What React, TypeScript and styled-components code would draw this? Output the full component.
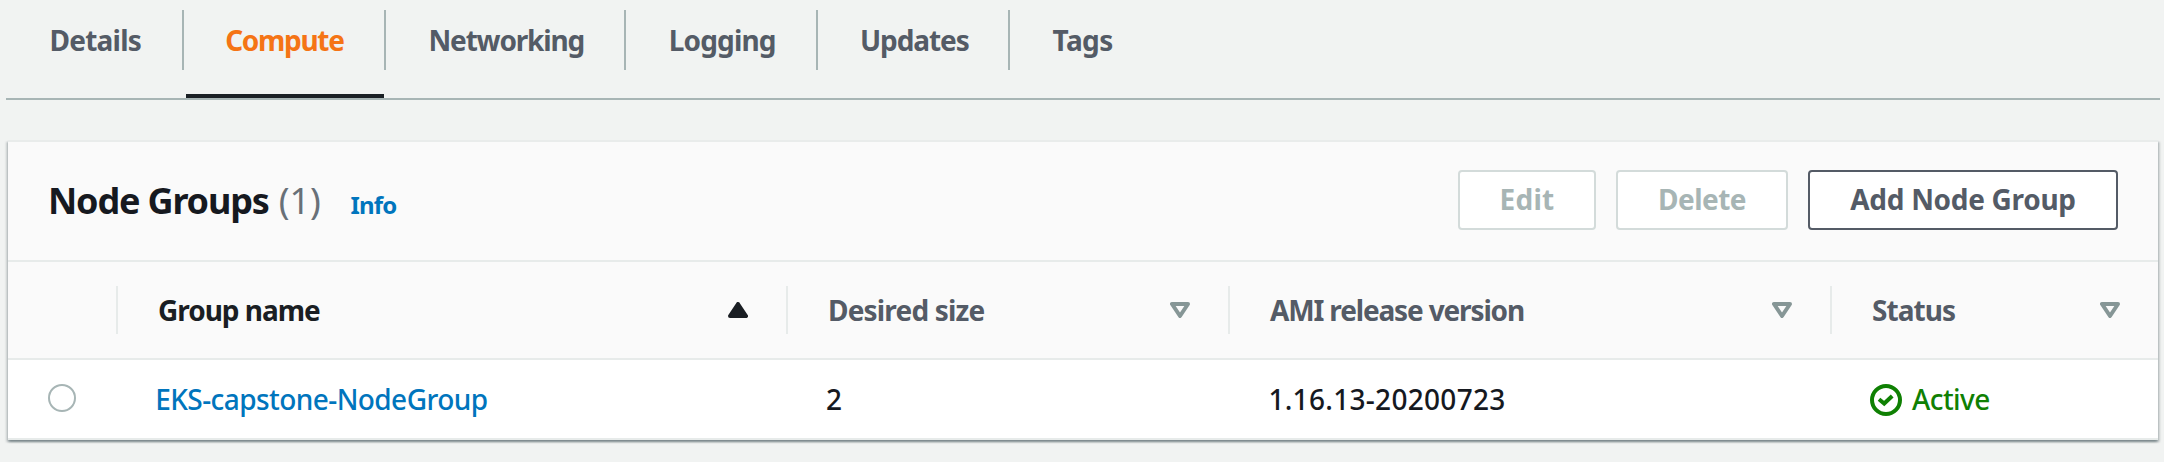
import React from 'react';
import styled, { createGlobalStyle } from 'styled-components';

const GlobalStyle = createGlobalStyle`
  *, *::before, *::after { box-sizing: border-box; }
  body {
    margin: 0;
    background: #f1f3f2;
    color: #16191f;
    font-family: "Noto Sans", "Open Sans", sans-serif;
    font-size: 28px;
    white-space: nowrap;
  }
`;

const Page = styled.main`
  padding: 0 4px 0 6px;
  height: 462px;
  overflow: hidden;
`;

const TabBar = styled.nav`
  display: flex;
  height: 100px;
  border-bottom: 2px solid #a7b5b5;
`;

const Tab = styled.a<{ $active?: boolean; $width: number }>`
  display: flex;
  flex-direction: column;
  justify-content: space-between;
  width: ${p => p.$width}px;
  padding-top: 10px;
  color: ${p => (p.$active ? '#f57415' : '#545b66')};

  &::after {
    content: '';
    height: 4px;
    margin: 0 2px;
    background: ${p => (p.$active ? '#1a2025' : 'transparent')};
  }
`;

const TabLabel = styled.span<{ $inset: number; $spacing: number; $last?: boolean }>`
  height: 60px;
  line-height: 60px;
  padding-left: ${p => p.$inset}px;
  border-right: ${p => (p.$last ? 'none' : '2px solid #a7b5b5')};
  font-weight: 700;
  letter-spacing: ${p => p.$spacing}px;
`;

const Panel = styled.section`
  margin: 40px 2px 0;
  border-top: 2px solid #e9eceb;
  background: #ffffff;
  box-shadow:
    0 2px 2px 0 rgba(0, 28, 36, 0.3),
    2px 2px 2px 0 rgba(0, 28, 36, 0.15),
    -2px 2px 2px 0 rgba(0, 28, 36, 0.15);
`;

const PanelHeader = styled.header`
  display: flex;
  justify-content: space-between;
  align-items: center;
  height: 120px;
  padding: 0 40px 2px;
  background: #fafafa;
  border-bottom: 2px solid #e7ebea;
`;

const Heading = styled.div`
  display: flex;
  align-items: baseline;
  padding-top: 2px;
`;

const Title = styled.h2`
  margin: 0;
  font-size: 36px;
  line-height: 44px;
  font-weight: 700;
  letter-spacing: -1.17px;
`;

const Counter = styled.span`
  margin-left: 10px;
  font-size: 36px;
  line-height: 44px;
  color: #687078;
`;

const InfoLink = styled.a`
  margin-left: 29.5px;
  font-size: 24px;
  font-weight: 700;
  letter-spacing: -0.8px;
  color: #0075bd;
`;

const Actions = styled.div`
  display: flex;
  gap: 20px;
`;

const Button = styled.button<{ $width: number; $spacing: number }>`
  width: ${p => p.$width}px;
  height: 60px;
  padding: 0 0 2px;
  border: 2px solid #545b66;
  border-radius: 4px;
  background: #ffffff;
  color: #545b66;
  font: inherit;
  font-weight: 700;
  line-height: 54px;
  letter-spacing: ${p => p.$spacing}px;

  &:disabled {
    border-color: #d3dbda;
    color: #a7b5b5;
  }
`;

const Columns = styled.div`
  display: grid;
  grid-template-columns: 110px 670px 442px 602px 326px;
`;

const HeadRow = styled(Columns)`
  height: 98px;
  padding: 24px 0;
  background: #fafafa;
  border-bottom: 2px solid #e7ebea;
`;

const HeadCell = styled.div<{ $sorted?: boolean; $spacing?: number }>`
  display: flex;
  align-items: center;
  justify-content: space-between;
  height: 48px;
  padding: 0 38px 0 40px;
  border-right: 2px solid #e7ebea;
  color: ${p => (p.$sorted ? '#1a1e23' : '#545b66')};
  font-weight: 700;
  line-height: 46px;
  letter-spacing: ${p => p.$spacing ?? 0}px;

  &:last-child {
    border-right: none;
  }
`;

const BodyRow = styled(Columns)`
  height: 80px;
  border-bottom: 2px solid #e7ebea;
`;

const Cell = styled.div<{ $inset?: number; $spacing?: number }>`
  display: flex;
  align-items: center;
  padding-left: ${p => p.$inset ?? 38}px;
  font-weight: 500;
  line-height: 78px;
  letter-spacing: ${p => p.$spacing ?? 0}px;
`;

const Radio = styled.span`
  width: 28px;
  height: 28px;
  margin-bottom: 2px;
  border: 2px solid #a7b5b5;
  border-radius: 50%;
`;

const GroupLink = styled.a`
  color: #0075bd;
`;

const Status = styled.span`
  display: flex;
  align-items: center;
  gap: 10px;
  color: #0f8003;
`;

const SortIcon = styled.svg`
  display: block;
  width: 20px;
  height: 16px;
`;

const StatusIcon = styled.svg`
  display: block;
  width: 32px;
  height: 32px;
  margin-top: 2px;
`;

const Ascending = () => (
  <SortIcon viewBox="0 0 20 16">
    <path d="M2 14L10 2l8 12z" fill="#1a1e23" stroke="#1a1e23" strokeWidth="4" strokeLinejoin="round" />
  </SortIcon>
);

const Sortable = () => (
  <SortIcon viewBox="0 0 20 16">
    <path d="M2 2h16l-8 12z" fill="none" stroke="#869696" strokeWidth="4" strokeLinejoin="round" />
  </SortIcon>
);

const tabs = [
  { label: 'Details', width: 178, inset: 43.4, spacing: -0.73 },
  { label: 'Compute', width: 202, inset: 41.2, spacing: -1.3, active: true },
  { label: 'Networking', width: 240, inset: 42.5, spacing: -1.17 },
  { label: 'Logging', width: 192, inset: 42.8, spacing: -0.85 },
  { label: 'Updates', width: 192, inset: 42, spacing: -1.08 },
  { label: 'Tags', width: 160, inset: 42.6, spacing: -0.6 },
];

const columns = [
  { label: 'Group name', spacing: -1.02, sorted: true },
  { label: 'Desired size', spacing: -0.82 },
  { label: 'AMI release version', spacing: -1.15 },
  { label: 'Status', spacing: -0.95 },
];

export default function App() {
  return (
    <>
      <GlobalStyle />
      <Page>
        <TabBar>
          {tabs.map((tab, i) => (
            <Tab key={tab.label} $active={tab.active} $width={tab.width}>
              <TabLabel $inset={tab.inset} $spacing={tab.spacing} $last={i === tabs.length - 1}>
                {tab.label}
              </TabLabel>
            </Tab>
          ))}
        </TabBar>

        <Panel>
          <PanelHeader>
            <Heading>
              <Title>Node Groups</Title>
              <Counter>(1)</Counter>
              <InfoLink>Info</InfoLink>
            </Heading>
            <Actions>
              <Button disabled $width={138} $spacing={0.27}>Edit</Button>
              <Button disabled $width={172} $spacing={-0.55}>Delete</Button>
              <Button $width={310} $spacing={-0.3}>Add Node Group</Button>
            </Actions>
          </PanelHeader>

          <HeadRow>
            <HeadCell />
            {columns.map(column => (
              <HeadCell key={column.label} $sorted={column.sorted} $spacing={column.spacing}>
                {column.label}
                {column.sorted ? <Ascending /> : <Sortable />}
              </HeadCell>
            ))}
          </HeadRow>

          <BodyRow>
            <Cell $inset={40}>
              <Radio />
            </Cell>
            <Cell $inset={37.2} $spacing={-0.57}>
              <GroupLink>EKS-capstone-NodeGroup</GroupLink>
            </Cell>
            <Cell>2</Cell>
            <Cell $inset={38.4} $spacing={0.3}>1.16.13-20200723</Cell>
            <Cell $spacing={-0.6}>
              <Status>
                <StatusIcon viewBox="0 0 32 32" fill="none" stroke="currentColor" strokeWidth="4">
                  <circle cx="16" cy="16" r="14" />
                  <path d="M9 15.2l5.2 4.3 8-7.5" />
                </StatusIcon>
                Active
              </Status>
            </Cell>
          </BodyRow>
        </Panel>
      </Page>
    </>
  );
}
